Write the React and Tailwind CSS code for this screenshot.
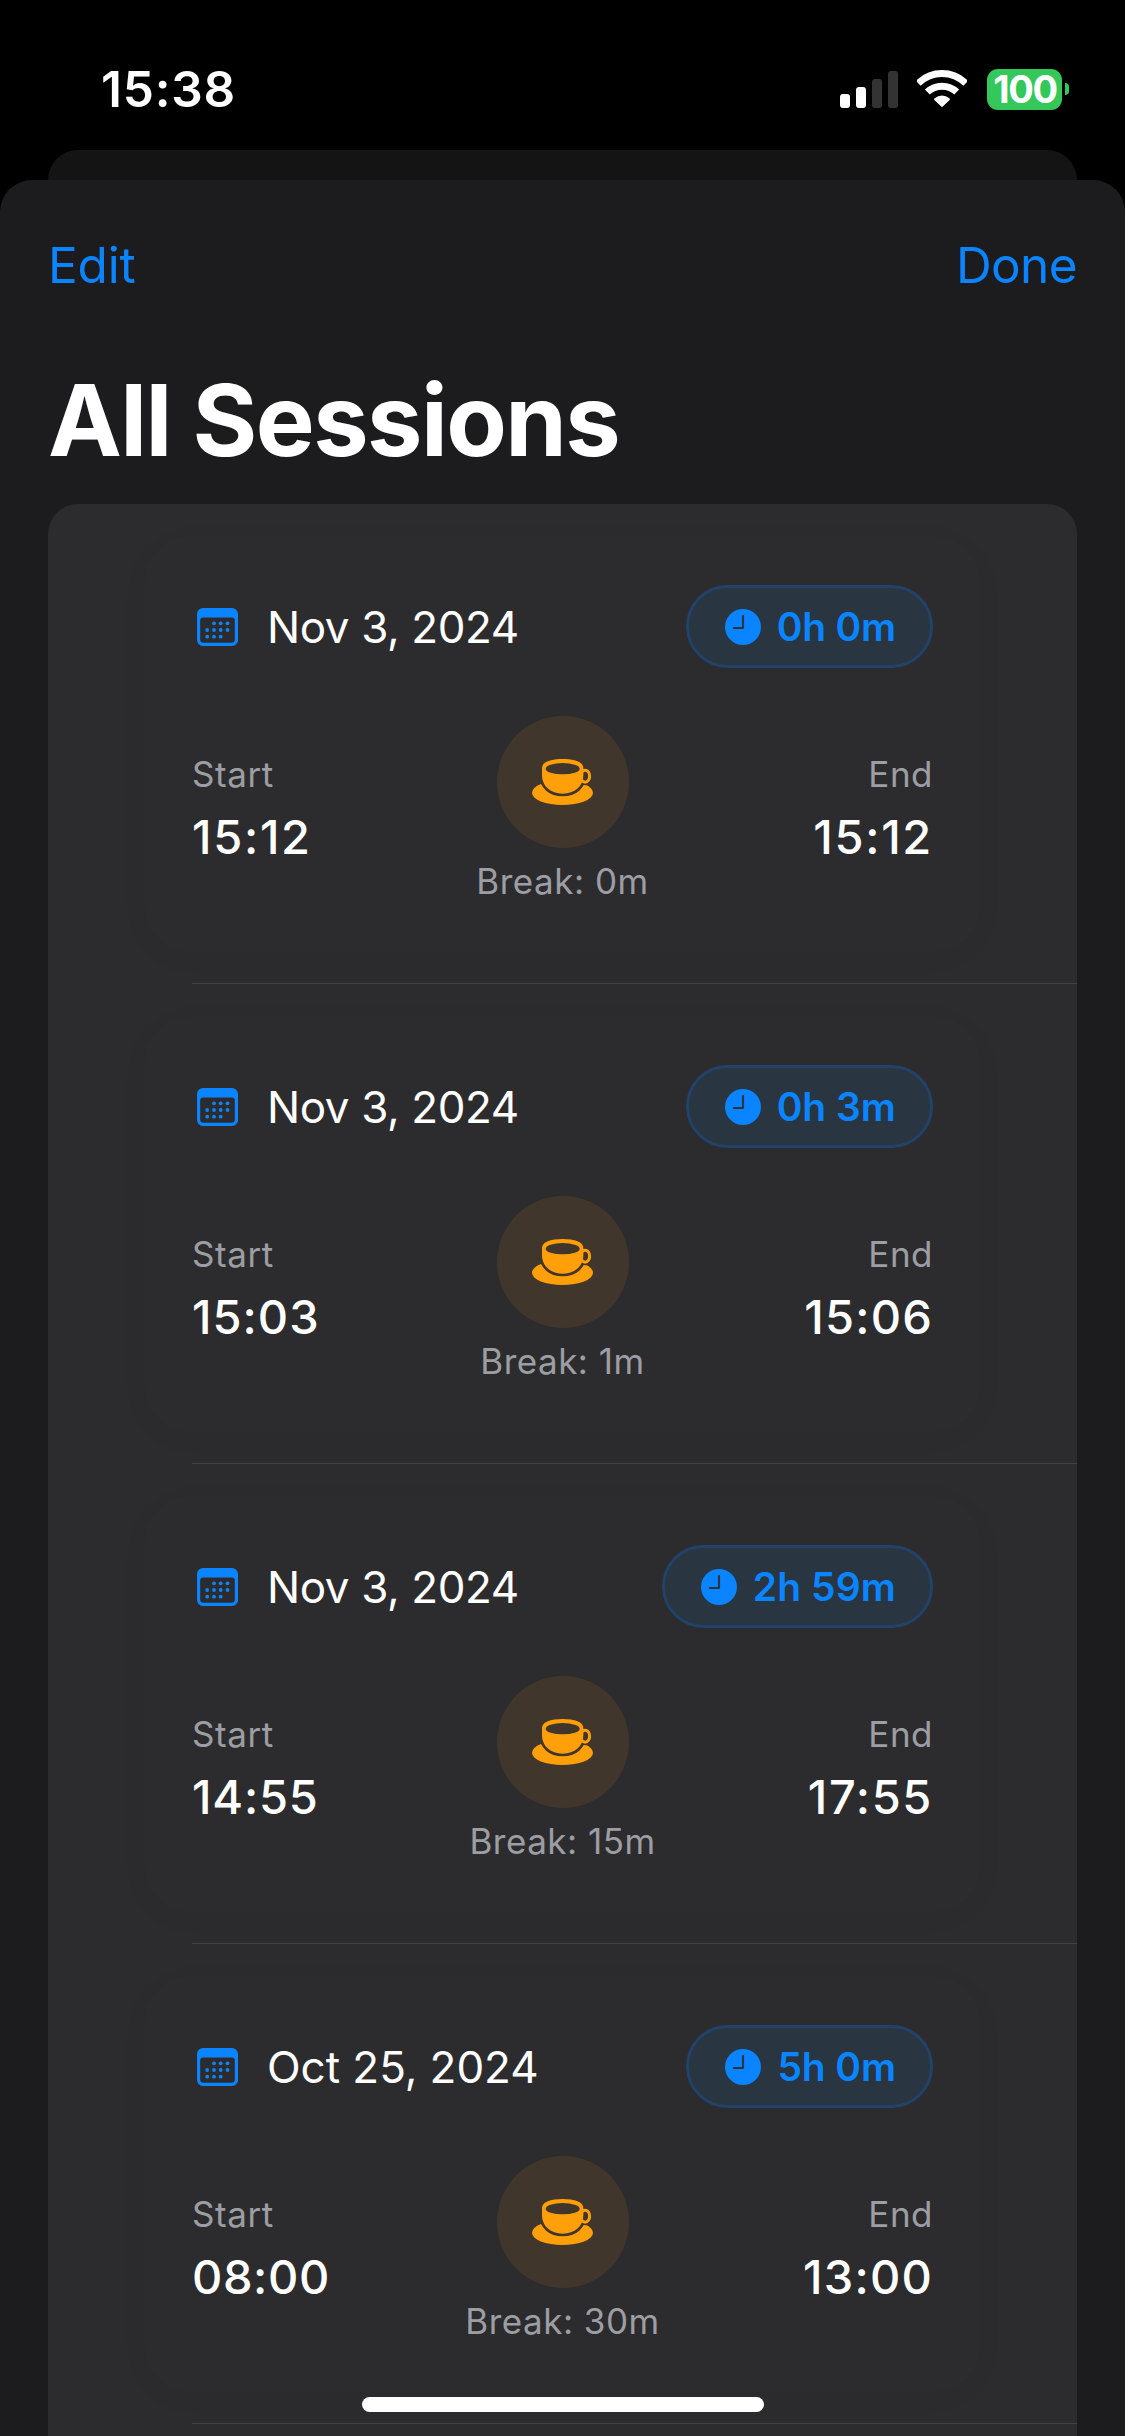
import React from "react";

const sessions = [
  { date: "Nov 3, 2024", dateTrack: "tracking-[-0.4px]", total: "0h 0m", totalTrack: "tracking-[-0.2px]", start: "15:12", startTrack: "tracking-[1.7px]", end: "15:12", endTrack: "tracking-[1.7px]", pause: "0m" },
  { date: "Nov 3, 2024", dateTrack: "tracking-[-0.4px]", total: "0h 3m", totalTrack: "tracking-[0px]", start: "15:03", startTrack: "tracking-[1px]", end: "15:06", endTrack: "tracking-[1.2px]", pause: "1m" },
  { date: "Nov 3, 2024", dateTrack: "tracking-[-0.4px]", total: "2h 59m", totalTrack: "tracking-[0.1px]", start: "14:55", startTrack: "tracking-[0.8px]", end: "17:55", endTrack: "tracking-[1.6px]", pause: "15m" },
  { date: "Oct 25, 2024", dateTrack: "tracking-[-0.05px]", total: "5h 0m", totalTrack: "tracking-[-0.1px]", start: "08:00", startTrack: "tracking-[0.6px]", end: "13:00", endTrack: "tracking-[1.2px]", pause: "30m" },
];

function CalendarIcon() {
  const dots = [
    [17, 15.3], [23.7, 15.3], [30.5, 15.3],
    [10.2, 22], [17, 22], [23.7, 22], [30.5, 22],
    [10.2, 28.7], [17, 28.7], [23.7, 28.7],
  ];
  return (
    <svg width="41" height="38" viewBox="0 0 41 38" className="shrink-0 fill-[#0a84ff]">
      <path
        fillRule="evenodd"
        d="M6 0H35A6 6 0 0 1 41 6V32A6 6 0 0 1 35 38H6A6 6 0 0 1 0 32V6A6 6 0 0 1 6 0ZM6.2 9.6A3 3 0 0 0 3.2 12.6V31.8A3 3 0 0 0 6.2 34.8H34.8A3 3 0 0 0 37.8 31.8V12.6A3 3 0 0 0 34.8 9.6Z"
      />
      {dots.map(([x, y]) => (
        <circle key={`${x}-${y}`} cx={x} cy={y} r="1.9" />
      ))}
    </svg>
  );
}

function ClockIcon() {
  return (
    <svg width="36" height="36" viewBox="0 0 36 36" className="shrink-0">
      <circle cx="18" cy="18" r="18" fill="#0a84ff" />
      <path d="M18 7V19H8.8" fill="none" stroke="#293541" strokeWidth="2.1" strokeLinecap="round" strokeLinejoin="round" />
    </svg>
  );
}

function CupIcon() {
  const body = "M66 84C66 66 92 57 128 57S190 66 190 84V106C190 139 164 161 128 161S66 139 66 106Z";
  return (
    <svg width="61" height="46" viewBox="36 57 183 138">
      <ellipse cx="127.5" cy="158" rx="91.5" ry="37" fill="#ff9f0a" />
      <path d={body} fill="#41362b" stroke="#41362b" strokeWidth="16" />
      <ellipse cx="196" cy="109" rx="17" ry="24" fill="#41362b" stroke="#41362b" strokeWidth="6" />
      <ellipse cx="195.5" cy="108.5" rx="13.5" ry="18" fill="none" stroke="#ff9f0a" strokeWidth="9" />
      <path d={body} fill="#ff9f0a" />
      <ellipse cx="128" cy="86" rx="51" ry="17" fill="#41362b" />
    </svg>
  );
}

function StatusBar() {
  return (
    <div className="flex h-[150px] items-center justify-between pt-[28px] pr-[56px] pl-[101px]">
      <span className="text-[49.5px] leading-[60px] font-semibold tracking-[0.8px] text-white">15:38</span>
      <div className="flex items-center">
        <div className="flex h-[37px] items-end gap-[6px]">
          <span className="h-[14px] w-[10px] rounded-[3px] bg-white" />
          <span className="h-[21px] w-[10px] rounded-[3px] bg-white" />
          <span className="h-[29px] w-[10px] rounded-[3px] bg-[#333333]" />
          <span className="h-[37px] w-[10px] rounded-[3px] bg-[#333333]" />
        </div>
        <svg width="50" height="37.3" viewBox="0 0 150 112" className="ml-[19px]">
          <g fill="none" stroke="#fff" strokeWidth="21">
            <path d="M3.5 40A101.5 101.5 0 0 1 146.5 40" />
            <path d="M30.9 66.3A63.5 63.5 0 0 1 119.1 66.3" />
          </g>
          <path d="M52 90Q50 87 53 84.5A35 35 0 0 1 97 84.5Q100 87 98 90L75 112Z" fill="#fff" />
        </svg>
        <div className="ml-[20px] flex h-[41px] w-[75px] items-center justify-center rounded-[11px] bg-[#34c759] pl-[1px]">
          <span className="text-[38px] leading-[41px] font-bold tracking-[-1.3px] text-white">100</span>
        </div>
        <span className="ml-[3px] h-[12px] w-[4px] rounded-r-full bg-[#34c759]" />
      </div>
    </div>
  );
}

function TimeColumn({ label, value, track, right }) {
  return (
    <div className={right ? "flex flex-col items-end pt-[37px]" : "flex flex-col items-start pt-[37px]"}>
      <span className={`text-[35px] leading-[42px] text-[#ebebf5]/60 ${right ? "tracking-[0.5px]" : "tracking-[0.6px]"}`}>{label}</span>
      <span className={`mt-[13px] text-[47px] leading-[58px] font-medium text-white ${track}`}>{value}</span>
    </div>
  );
}

function SessionRow({ session }) {
  return (
    <div className="h-[480px] pt-[32px]">
      <div className="mx-[96px] h-[416px] rounded-[48px] bg-[#2c2c2e] px-[48px] pt-[49px] shadow-[0_6px_30px_rgba(0,0,0,0.03)]">
        <div className="flex h-[83px] items-center justify-between">
          <div className="flex items-center gap-[29px] pl-[5px]">
            <CalendarIcon />
            <span className={`text-[44px] leading-[54px] text-white ${session.dateTrack}`}>{session.date}</span>
          </div>
          <div className="flex h-[83px] items-center gap-[16px] rounded-full border-[3px] border-[#22426a] bg-[#293541] pr-[34px] pl-[36px]">
            <ClockIcon />
            <span className={`text-[39px] leading-[48px] font-semibold text-[#0a84ff] ${session.totalTrack}`}>{session.total}</span>
          </div>
        </div>
        <div className="mt-[48px] grid grid-cols-3">
          <TimeColumn label="Start" value={session.start} track={session.startTrack} />
          <div className="flex flex-col items-center">
            <div className="flex h-[132px] w-[132px] items-center justify-center rounded-full bg-[#41362b]">
              <CupIcon />
            </div>
            <span className="mt-[12px] text-[35px] leading-[42px] tracking-[0.5px] whitespace-nowrap text-[#ebebf5]/60">
              Break: {session.pause}
            </span>
          </div>
          <TimeColumn label="End" value={session.end} track={session.endTrack} right />
        </div>
      </div>
      <div className="mt-[31px] ml-[144px] h-px bg-[#424245]" />
    </div>
  );
}

export default function App() {
  return (
    <div className="relative flex h-[2436px] w-[1125px] flex-col overflow-hidden bg-black font-['Inter',sans-serif]">
      <StatusBar />
      <div className="mx-[48px] h-[30px] shrink-0 rounded-t-[30px] bg-[#141414]" />
      <div className="flex-1 overflow-hidden rounded-t-[32px] bg-[#1c1c1e] px-[48px] pt-[55px]">
        <div className="flex justify-between text-[49.5px] leading-[60px] text-[#0a84ff]">
          <span className="tracking-[-0.2px]">Edit</span>
          <span className="tracking-[-0.6px]">Done</span>
        </div>
        <h1 className="mt-[65px] text-[99px] leading-[120px] font-bold tracking-[-1.6px] text-white">All Sessions</h1>
        <div className="mt-[24px] h-[1990px] rounded-t-[30px] bg-[#2c2c2e]">
          {sessions.map((session, i) => (
            <SessionRow key={i} session={session} />
          ))}
        </div>
      </div>
      <div className="absolute bottom-[24px] left-[362px] h-[15px] w-[402px] rounded-full bg-white" />
    </div>
  );
}
